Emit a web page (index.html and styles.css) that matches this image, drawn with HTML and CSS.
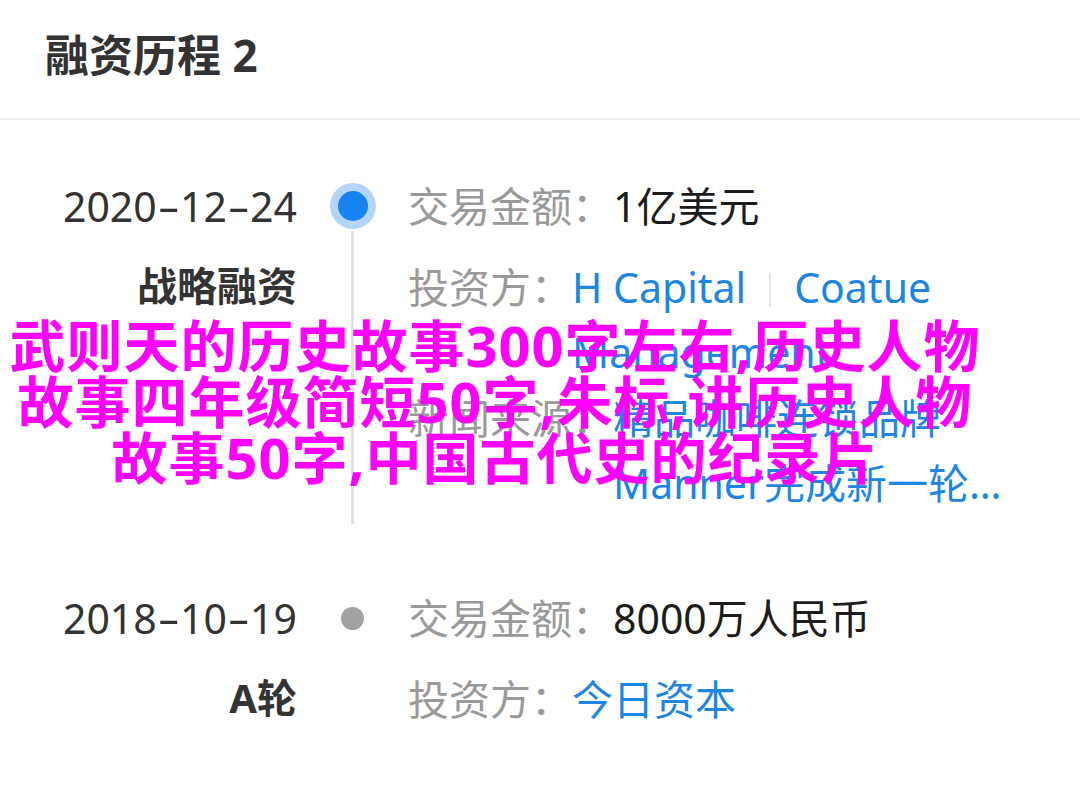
FILE: index.html
```html
<!DOCTYPE html>
<html>
<head>
    <meta charset="utf-8">
    <title>融资历程</title>
    <link rel="stylesheet" href="styles.css">
</head>
<body>

    <div class="page">
        <div class="head">
            <h1 class="title">融资历程 2</h1>
        </div>

        <div class="timeline">
            <div class="entry">
                <div class="when">
                    <div class="date">2020<span class="dash">-</span>12<span class="dash">-</span>24</div>
                    <div class="round">战略融资</div>
                </div>
                <div class="axis">
                    <span class="dot active"></span>
                    <span class="rail"></span>
                </div>
                <div class="info">
                    <div class="row">
                        <span class="label">交易金额：</span>
                        <span class="value">1亿美元</span>
                    </div>
                    <div class="row">
                        <span class="label">投资方：</span>
                        <span class="value link">H Capital<span class="sep"></span>Coatue Management</span>
                    </div>
                    <div class="row news">
                        <span class="label">新闻来源：</span>
                        <span class="value link clamp">精品咖啡连锁品牌Manner完成新一轮融资，估值超过百亿</span>
                    </div>
                </div>
            </div>

            <div class="entry last">
                <div class="when">
                    <div class="date">2018<span class="dash">-</span>10<span class="dash">-</span>19</div>
                    <div class="round">A轮</div>
                </div>
                <div class="axis">
                    <span class="dot"></span>
                </div>
                <div class="info">
                    <div class="row">
                        <span class="label">交易金额：</span>
                        <span class="value">8000万人民币</span>
                    </div>
                    <div class="row">
                        <span class="label">投资方：</span>
                        <span class="value link">今日资本</span>
                    </div>
                </div>
            </div>
        </div>

        <!-- watermark caption laid over the screenshot -->
        <div class="overlay">
            武则天的历史故事300字左右,历史人物<br>
            故事四年级简短50字,朱标,讲历史人物<br>
            故事50字,中国古代史的纪录片
        </div>
    </div>

</body>
</html>
```

FILE: styles.css
```css
body, html {
    margin: 0;
    background: #fff;
    font-family: "Noto Sans", "Noto Sans CJK SC", sans-serif;
}

.page {
    position: relative;
    width: 1080px;
    height: 789px;
    overflow: hidden;
}

.head {
    padding: 23px 45px 31px;
    border-bottom: 2px solid #ececec;
}

.title {
    margin: 0;
    font-size: 44px;
    line-height: 64px;
    font-weight: 700;
    color: #333;
}

.timeline {
    padding: 54px 64px 0 45px;
}

.entry {
    display: grid;
    grid-template-columns: 252px 111px 1fr;
    padding-bottom: 70px;
}

.entry.last {
    padding-bottom: 0;
}

.when {
    text-align: right;
    color: #333;
}

.date {
    font-size: 41px;
    line-height: 64px;
}

.dash {
    display: inline-block;
    margin: 0 5px;
    transform: scaleX(1.7);
}

.round {
    margin-top: 16px;
    font-size: 40px;
    line-height: 64px;
    font-weight: 700;
}

.axis {
    display: flex;
    flex-direction: column;
    align-items: center;
}

.dot {
    width: 23px;
    height: 23px;
    margin-top: 21px;
    border-radius: 50%;
    background: #a2a2a2;
}

.dot.active {
    width: 30px;
    height: 30px;
    margin-top: 17px;
    background: #1683f0;
    box-shadow: 0 0 0 8px #b3d6f8;
}

.rail {
    flex: 1;
    width: 3px;
    margin-top: 10px;
    margin-bottom: -8px;
    background: #e2e2e2;
}

.row {
    display: flex;
    font-size: 41px;
    line-height: 65px;
}

.row + .row {
    margin-top: 16px;
}

.row.news {
    margin-top: 1px;
}

.label {
    flex: none;
    color: #9a9a9a;
}

.value {
    flex: 1;
    min-width: 0;
    color: #1c1c1c;
}

.value.link {
    color: #1d86e3;
}

.sep {
    display: inline-block;
    width: 2px;
    height: 34px;
    margin: 0 23px;
    vertical-align: -4px;
    background: #e6e6e6;
}

.clamp {
    display: -webkit-box;
    -webkit-line-clamp: 2;
    -webkit-box-orient: vertical;
    overflow: hidden;
}

.overlay {
    position: absolute;
    top: 317px;
    left: 0;
    width: 990px;
    text-align: center;
    font-family: "Noto Sans", "Noto Sans CJK SC", sans-serif;
    font-size: 56px;
    line-height: 56px;
    font-weight: 700;
    letter-spacing: 1px;
    color: #ff00ff;
}
```
